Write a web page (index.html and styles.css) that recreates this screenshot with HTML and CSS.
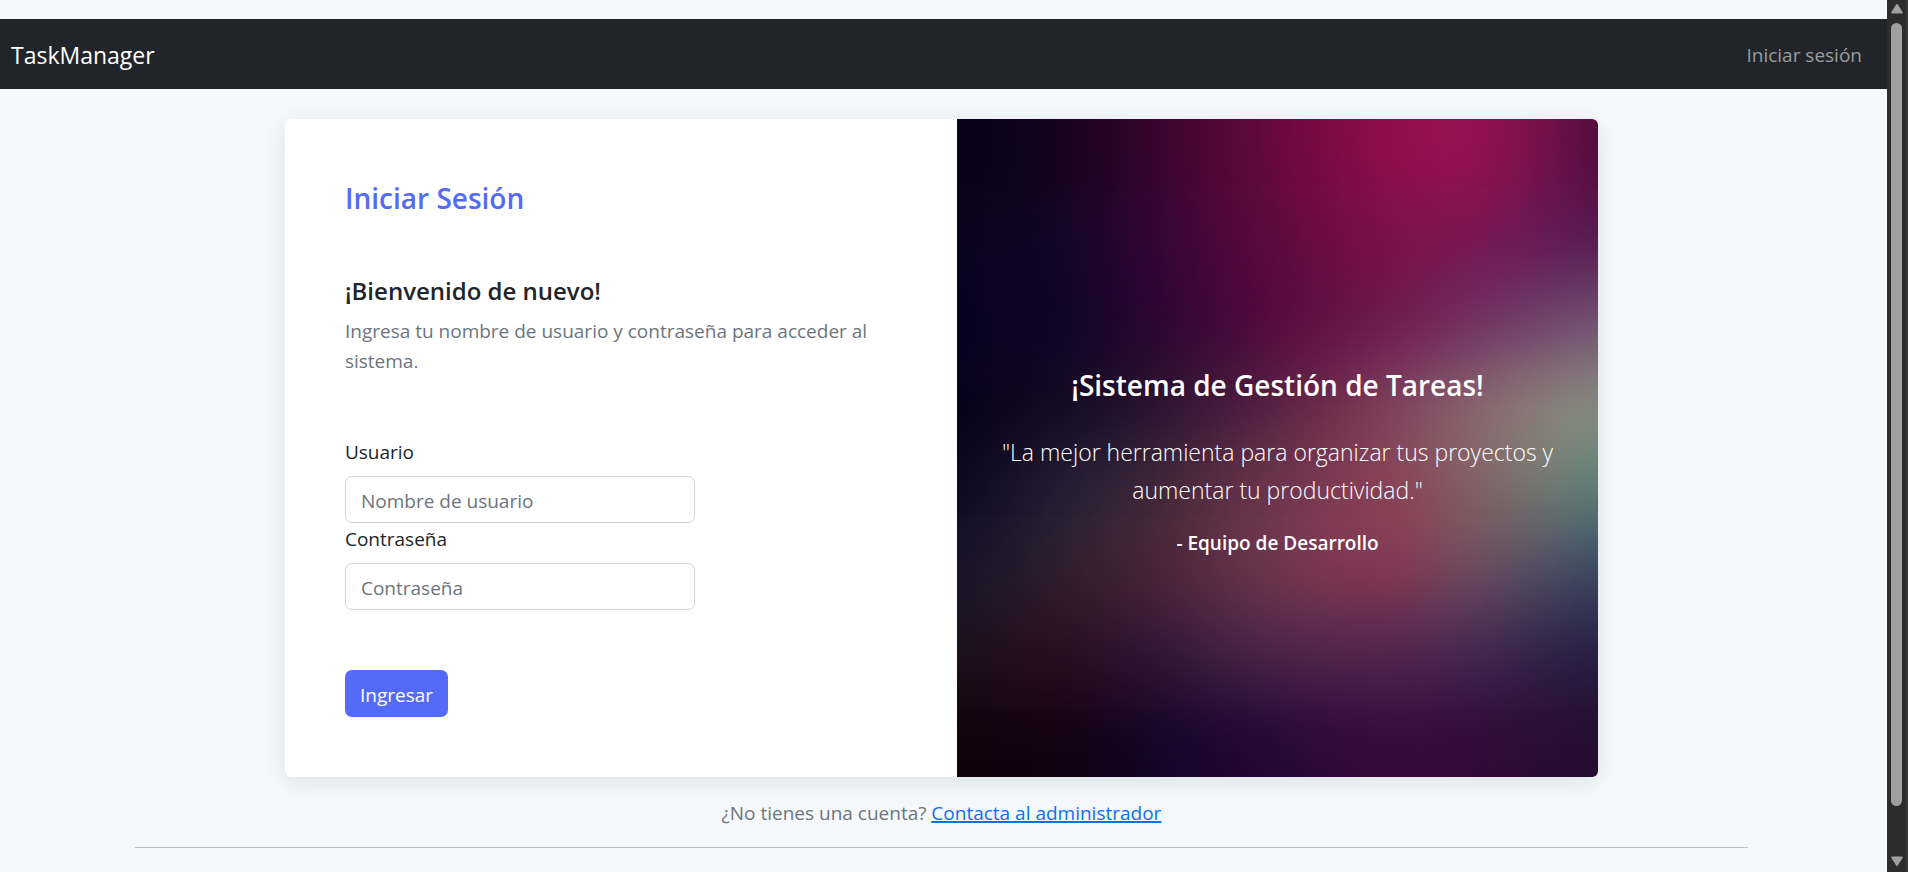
FILE: index.html
```html
<!DOCTYPE html>
<html lang="es">
<head>
<meta charset="utf-8">
<meta name="viewport" content="width=device-width, initial-scale=1">
<title>TaskManager</title>
<link rel="stylesheet" href="styles.css">
</head>
<body>
<div class="page">
  <nav class="navbar">
    <a class="brand" href="#">TaskManager</a>
    <a class="nav-link" href="#">Iniciar sesión</a>
  </nav>
  <main class="content">
    <div class="card">
      <section class="login">
        <h1 class="login-title">Iniciar Sesión</h1>
        <h2 class="welcome">¡Bienvenido de nuevo!</h2>
        <p class="hint">Ingresa tu nombre de usuario y contraseña para acceder al sistema.</p>
        <form class="form">
          <label class="label" for="user">Usuario</label>
          <input class="input" id="user" type="text" placeholder="Nombre de usuario">
          <label class="label" for="pass">Contraseña</label>
          <input class="input" id="pass" type="password" placeholder="Contraseña">
          <button class="button" type="submit">Ingresar</button>
        </form>
      </section>
      <section class="promo">
        <svg class="promo-art" viewBox="0 0 640 656" preserveAspectRatio="none" aria-hidden="true">
          <defs>
            <filter id="soft" filterUnits="userSpaceOnUse" x="-80" y="-160" width="800" height="976" color-interpolation-filters="sRGB"><feGaussianBlur stdDeviation="24 36"/></filter>
            <linearGradient id="r1" gradientUnits="userSpaceOnUse" x1="0" x2="640"><stop offset=".06" stop-color="#0a0218"/><stop offset=".19" stop-color="#1a0320"/><stop offset=".31" stop-color="#38042f"/><stop offset=".44" stop-color="#5a083a"/><stop offset=".56" stop-color="#780a40"/><stop offset=".69" stop-color="#940f4c"/><stop offset=".81" stop-color="#961250"/><stop offset=".94" stop-color="#6c104a"/><stop offset="1" stop-color="#500b3c"/></linearGradient>
            <linearGradient id="r2" gradientUnits="userSpaceOnUse" x1="0" x2="640"><stop offset="0" stop-color="#06021e"/><stop offset=".19" stop-color="#150428"/><stop offset=".31" stop-color="#330434"/><stop offset=".44" stop-color="#51073a"/><stop offset=".56" stop-color="#680a42"/><stop offset=".69" stop-color="#791048"/><stop offset=".81" stop-color="#761552"/><stop offset=".94" stop-color="#5c1852"/><stop offset="1" stop-color="#521a50"/></linearGradient>
            <linearGradient id="r3" gradientUnits="userSpaceOnUse" x1="0" x2="640"><stop offset="0" stop-color="#050120"/><stop offset=".19" stop-color="#110327"/><stop offset=".31" stop-color="#2a0430"/><stop offset=".44" stop-color="#48063a"/><stop offset=".56" stop-color="#5f0c42"/><stop offset=".69" stop-color="#6f1a50"/><stop offset=".81" stop-color="#6e3062"/><stop offset=".94" stop-color="#70486f"/><stop offset="1" stop-color="#735474"/></linearGradient>
            <linearGradient id="r4" gradientUnits="userSpaceOnUse" x1="0" x2="640"><stop offset="0" stop-color="#05011a"/><stop offset=".19" stop-color="#160a24"/><stop offset=".31" stop-color="#28142e"/><stop offset=".44" stop-color="#481c3e"/><stop offset=".56" stop-color="#6a2a4a"/><stop offset=".69" stop-color="#81485f"/><stop offset=".81" stop-color="#8b6c72"/><stop offset=".94" stop-color="#908b7c"/><stop offset="1" stop-color="#889080"/></linearGradient>
            <linearGradient id="r5" gradientUnits="userSpaceOnUse" x1="0" x2="640"><stop offset="0" stop-color="#0a081e"/><stop offset=".19" stop-color="#292338"/><stop offset=".31" stop-color="#40293a"/><stop offset=".44" stop-color="#653349"/><stop offset=".56" stop-color="#7b3c52"/><stop offset=".69" stop-color="#8e4458"/><stop offset=".81" stop-color="#826462"/><stop offset=".94" stop-color="#6e7f76"/><stop offset="1" stop-color="#568078"/></linearGradient>
            <linearGradient id="r6" gradientUnits="userSpaceOnUse" x1="0" x2="640"><stop offset="0" stop-color="#171428"/><stop offset=".19" stop-color="#34202f"/><stop offset=".31" stop-color="#4b2238"/><stop offset=".44" stop-color="#66324a"/><stop offset=".56" stop-color="#7d3752"/><stop offset=".69" stop-color="#853752"/><stop offset=".81" stop-color="#6b4c60"/><stop offset=".94" stop-color="#474a62"/><stop offset="1" stop-color="#344662"/></linearGradient>
            <linearGradient id="r7" gradientUnits="userSpaceOnUse" x1="0" x2="640"><stop offset="0" stop-color="#1c101c"/><stop offset=".19" stop-color="#2c0c22"/><stop offset=".31" stop-color="#2f1534"/><stop offset=".44" stop-color="#442244"/><stop offset=".56" stop-color="#50244a"/><stop offset=".69" stop-color="#50244e"/><stop offset=".81" stop-color="#402650"/><stop offset=".94" stop-color="#2a1e42"/><stop offset="1" stop-color="#261c40"/></linearGradient>
            <linearGradient id="r8" gradientUnits="userSpaceOnUse" x1="0" x2="640"><stop offset="0" stop-color="#11010e"/><stop offset=".19" stop-color="#110112"/><stop offset=".31" stop-color="#140428"/><stop offset=".44" stop-color="#1f0632"/><stop offset=".56" stop-color="#2c093a"/><stop offset=".69" stop-color="#350a3a"/><stop offset=".81" stop-color="#310a36"/><stop offset=".94" stop-color="#280c32"/><stop offset="1" stop-color="#240c32"/></linearGradient>
          </defs>
          <g filter="url(#soft)">
            <rect x="-80" y="-160" width="800" height="242" fill="url(#r1)"/>
            <rect x="-80" y="82" width="800" height="82" fill="url(#r2)"/>
            <rect x="-80" y="164" width="800" height="82" fill="url(#r3)"/>
            <rect x="-80" y="246" width="800" height="82" fill="url(#r4)"/>
            <rect x="-80" y="328" width="800" height="82" fill="url(#r5)"/>
            <rect x="-80" y="410" width="800" height="82" fill="url(#r6)"/>
            <rect x="-80" y="492" width="800" height="82" fill="url(#r7)"/>
            <rect x="-80" y="574" width="800" height="242" fill="url(#r8)"/>
          </g>
        </svg>
        <div class="promo-text">
          <h2 class="promo-title">¡Sistema de Gestión de Tareas!</h2>
          <p class="promo-quote">"La mejor herramienta para organizar tus proyectos y aumentar tu productividad."</p>
          <p class="promo-author">- Equipo de Desarrollo</p>
        </div>
      </section>
    </div>
    <p class="contact">¿No tienes una cuenta? <a class="contact-link" href="#">Contacta al administrador</a></p>
    <hr class="rule">
  </main>
</div>
<div class="scrollbar" aria-hidden="true">
  <svg class="arrow" viewBox="0 0 12 10"><path d="M5.200 .6 Q6 -.4 6.800 .6 L11.600 8 Q12.200 9.600 10.800 9.600 H1.200 Q-.2 9.600 .4 8 Z"/></svg>
  <div class="track"><div class="thumb"></div></div>
  <svg class="arrow" viewBox="0 0 12 10"><path d="M5.200 9.400 Q6 10.400 6.800 9.400 L11.600 2 Q12.200 .4 10.800 .4 H1.200 Q-.2 .4 .4 2 Z"/></svg>
</div>
</body>
</html>
```

FILE: styles.css
```css
* { box-sizing: border-box; }

body {
  margin: 0;
  height: 100vh;
  display: flex;
  overflow: hidden;
  background: #f5f9fc;
  color: #212529;
  font-family: "Open Sans", "Noto Sans", sans-serif;
  font-size: 19px;
  line-height: 30px;
}

h1, h2, p { margin: 0; }

.page {
  flex: 1;
  min-width: 0;
  padding-top: 19px;
}

.navbar {
  display: flex;
  align-items: center;
  justify-content: space-between;
  height: 70px;
  padding: 2px 25px 0 11px;
  background: #212529;
}

.brand {
  color: #fff;
  font-size: 23px;
  text-decoration: none;
}

.nav-link {
  color: #9b9d9e;
  text-decoration: none;
}

.content { padding: 30px calc(7.15% + 4px) 0 7.15%; }

.card {
  display: grid;
  grid-template-columns: 672fr 641fr;
  width: 81.4%;
  margin: 0 auto;
  border-radius: 6px;
  overflow: hidden;
  background: #fff;
  box-shadow: 0 5px 25px rgba(0, 0, 0, 0.1);
}

.login { padding: 60px; }

.login-title {
  margin-bottom: 59px;
  color: #536bf6;
  font-size: 28px;
  font-weight: 600;
  line-height: 38px;
}

.welcome {
  margin-bottom: 10px;
  font-size: 24px;
  font-weight: 600;
}

.hint {
  margin-bottom: 61px;
  color: #6c757d;
}

.form {
  display: flex;
  flex-direction: column;
  align-items: flex-start;
}

.label { margin-bottom: 9px; }

.input {
  width: 350px;
  max-width: 100%;
  height: 47px;
  margin-bottom: 1px;
  padding: 2px 15px 0;
  border: 1px solid #ced4da;
  border-radius: 7px;
  background: #fff;
  color: #212529;
  font: inherit;
}

.input::placeholder {
  color: #6c757d;
  opacity: 1;
}

.button {
  height: 47px;
  margin-top: 59px;
  padding: 2px 15px 0;
  border: 0;
  border-radius: 7px;
  background: #536bf8;
  color: #fff;
  font: inherit;
}

.promo {
  position: relative;
  display: flex;
  align-items: center;
  justify-content: center;
  padding: 28px 36px 0;
  color: #fff;
  text-align: center;
}

.promo-art {
  position: absolute;
  inset: 0;
  width: 100%;
  height: 100%;
}

.promo-text { position: relative; }

.promo-title {
  margin-bottom: 30px;
  font-size: 28px;
  font-weight: 600;
  line-height: 36px;
}

.promo-quote {
  margin-bottom: 19px;
  font-size: 23px;
  font-weight: 300;
  line-height: 38px;
}

.promo-author { font-weight: 600; }

.contact {
  margin-top: 21px;
  color: #6c757d;
  text-align: center;
}

.contact-link {
  color: #0d6efd;
  text-decoration-thickness: 2px;
}

.rule {
  margin: 19px 0 0;
  border: 0;
  border-top: 1px solid #bcc1c5;
}

.scrollbar {
  display: flex;
  flex-direction: column;
  align-items: center;
  width: 21px;
  padding: 4px 0 6px;
  border-right: 2px solid #363636;
  background: #2c2c2c;
}

.arrow {
  flex: none;
  width: 12px;
  height: 10px;
  fill: #9f9f9f;
}

.track {
  flex: 1;
  padding: 9px 0 0;
}

.thumb {
  width: 11px;
  height: 94%;
  border-radius: 6px;
  background: #9f9f9f;
}
```
